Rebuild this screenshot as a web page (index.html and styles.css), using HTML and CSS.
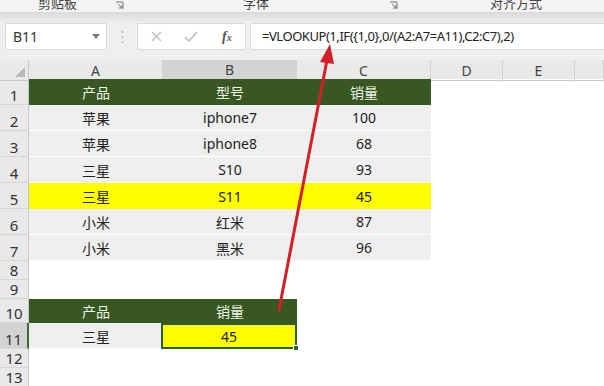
FILE: index.html
```html
<!DOCTYPE html>
<html lang="zh-CN">
  <head>
    <meta charset="UTF-8" />
    <meta name="viewport" content="width=device-width, initial-scale=1.0" />
    <title>VLOOKUP 反向查找</title>
    <link rel="stylesheet" href="styles.css">
  </head>
  <body>
    <div class="ribbon">
      <div class="group group-clip">
        <span class="group-name">剪贴板</span>
        <svg class="launcher" width="9" height="9" viewBox="0 0 9 9"><path d="M1 1 H8 V8 M3 3 L7 7 M7 4 V7 H4" fill="none" stroke="#777" stroke-width="1"/></svg>
      </div>
      <div class="group group-font">
        <span class="group-name">字体</span>
        <svg class="launcher" width="9" height="9" viewBox="0 0 9 9"><path d="M1 1 H8 V8 M3 3 L7 7 M7 4 V7 H4" fill="none" stroke="#777" stroke-width="1"/></svg>
      </div>
      <div class="group group-align">
        <span class="group-name">对齐方式</span>
      </div>
    </div>
    <div class="ribbon-shade"></div>

    <div class="formula-bar">
      <div class="name-box">
        <span>B11</span>
        <svg width="8" height="5" viewBox="0 0 8 5"><path d="M0 0 H8 L4 5 Z" fill="#7a7a7a"/></svg>
      </div>
      <div class="grip">
        <svg width="3" height="14" viewBox="0 0 3 14"><circle cx="1.5" cy="2" r="1" fill="#b5b5b5"/><circle cx="1.5" cy="7" r="1" fill="#b5b5b5"/><circle cx="1.5" cy="12" r="1" fill="#b5b5b5"/></svg>
      </div>
      <div class="fx-box">
        <svg class="btn-cancel" width="11" height="11" viewBox="0 0 11 11"><path d="M1 1 L10 10 M10 1 L1 10" stroke="#bdbdbd" stroke-width="1.4"/></svg>
        <svg class="btn-enter" width="14" height="11" viewBox="0 0 14 11"><path d="M1 6 L5 10 L13 1" fill="none" stroke="#bdbdbd" stroke-width="1.6"/></svg>
        <span class="fx">f<span class="fx-x">x</span></span>
      </div>
      <div class="formula">=VLOOKUP(1,IF({1,0},0/(A2:A7=A11),C2:C7),2)</div>
    </div>

    <div class="sheet">
      <div class="row col-heads">
        <div class="corner"></div>
        <div class="ch">A</div>
        <div class="ch active">B</div>
        <div class="ch">C</div>
        <div class="ch">D</div>
        <div class="ch">E</div>
        <div class="ch"></div>
      </div>
      <div class="row">
        <div class="rh">1</div>
        <div class="c head">产品</div>
        <div class="c head">型号</div>
        <div class="c head">销量</div>
        <div class="c"></div><div class="c"></div><div class="c"></div>
      </div>
      <div class="row">
        <div class="rh">2</div>
        <div class="c fill">苹果</div>
        <div class="c fill">iphone7</div>
        <div class="c fill">100</div>
        <div class="c"></div><div class="c"></div><div class="c"></div>
      </div>
      <div class="row">
        <div class="rh">3</div>
        <div class="c fill">苹果</div>
        <div class="c fill">iphone8</div>
        <div class="c fill">68</div>
        <div class="c"></div><div class="c"></div><div class="c"></div>
      </div>
      <div class="row">
        <div class="rh">4</div>
        <div class="c fill">三星</div>
        <div class="c fill">S10</div>
        <div class="c fill">93</div>
        <div class="c"></div><div class="c"></div><div class="c"></div>
      </div>
      <div class="row">
        <div class="rh">5</div>
        <div class="c mark">三星</div>
        <div class="c mark">S11</div>
        <div class="c mark">45</div>
        <div class="c"></div><div class="c"></div><div class="c"></div>
      </div>
      <div class="row">
        <div class="rh">6</div>
        <div class="c fill">小米</div>
        <div class="c fill">红米</div>
        <div class="c fill">87</div>
        <div class="c"></div><div class="c"></div><div class="c"></div>
      </div>
      <div class="row">
        <div class="rh">7</div>
        <div class="c fill">小米</div>
        <div class="c fill">黑米</div>
        <div class="c fill">96</div>
        <div class="c"></div><div class="c"></div><div class="c"></div>
      </div>
      <div class="row low">
        <div class="rh">8</div>
        <div class="c"></div><div class="c"></div><div class="c"></div><div class="c"></div><div class="c"></div><div class="c"></div>
      </div>
      <div class="row low">
        <div class="rh">9</div>
        <div class="c"></div><div class="c"></div><div class="c"></div><div class="c"></div><div class="c"></div><div class="c"></div>
      </div>
      <div class="row mid">
        <div class="rh">10</div>
        <div class="c head">产品</div>
        <div class="c head">销量</div>
        <div class="c"></div><div class="c"></div><div class="c"></div><div class="c"></div>
      </div>
      <div class="row">
        <div class="rh active">11</div>
        <div class="c fill">三星</div>
        <div class="c mark selected">45<span class="handle"></span></div>
        <div class="c"></div><div class="c"></div><div class="c"></div><div class="c"></div>
      </div>
      <div class="row low">
        <div class="rh">12</div>
        <div class="c"></div><div class="c"></div><div class="c"></div><div class="c"></div><div class="c"></div><div class="c"></div>
      </div>
      <div class="row low">
        <div class="rh">13</div>
        <div class="c"></div><div class="c"></div><div class="c"></div><div class="c"></div><div class="c"></div><div class="c"></div>
      </div>
    </div>

    <!-- annotation arrow pointing at the formula -->
    <svg class="arrow" width="604" height="386" viewBox="0 0 604 386">
      <line x1="279" y1="310" x2="327" y2="60" stroke="#d41f26" stroke-width="3" stroke-linecap="round"/>
      <polygon points="330,44 320,62 334,64" fill="#d41f26"/>
    </svg>
  </body>
</html>
```

FILE: styles.css
```css
* {
  margin: 0;
  padding: 0;
  box-sizing: border-box;
}

body {
  width: 604px;
  height: 386px;
  overflow: hidden;
  position: relative;
  background: #fff;
  color: #222;
  font-family: "Noto Sans", "Noto Sans CJK SC", sans-serif;
}

/* ribbon strip (cut off at top) */
.ribbon {
  height: 13px;
  display: flex;
  overflow: hidden;
  background: #f3f3f3;
  border-bottom: 1px solid #d9d9d9;
}

.group {
  display: flex;
  align-items: flex-start;
  flex-shrink: 0;
}

.group-name {
  font-size: 13px;
  line-height: 13px;
  margin-top: -3px;
  color: #444;
  white-space: nowrap;
  flex-shrink: 0;
}

.launcher {
  margin-top: 1px;
  flex-shrink: 0;
}

.group-clip {
  width: 126px;
  padding-left: 38px;
}

.group-clip .launcher {
  margin-left: 38px;
}

.group-font {
  width: 274px;
  padding-left: 117px;
}

.group-font .launcher {
  margin-left: 120px;
}

.group-align {
  padding-left: 90px;
}

.ribbon-shade {
  height: 9px;
  background: linear-gradient(#dcdcdc, #ededed);
}

/* formula bar */
.formula-bar {
  height: 38px;
  display: flex;
  align-items: flex-start;
  padding: 1px 0 0 5px;
  background: #efefef;
}

.name-box {
  width: 102px;
  height: 27px;
  background: #fff;
  border: 1px solid #dadada;
  display: flex;
  align-items: center;
  justify-content: space-between;
  padding: 0 6px 0 7px;
  font-size: 14px;
  color: #333;
}

.grip {
  width: 30px;
  height: 27px;
  display: flex;
  align-items: center;
  justify-content: center;
}

.fx-box {
  width: 109px;
  height: 27px;
  background: #fff;
  border: 1px solid #dadada;
  display: flex;
  align-items: center;
  padding-left: 13px;
}

.btn-enter {
  margin-left: 22px;
}

.fx {
  margin-left: 24px;
  font-family: "Liberation Serif", serif;
  font-style: italic;
  font-weight: bold;
  font-size: 14px;
  color: #555;
}

.fx-x {
  font-size: 10px;
}

.formula {
  flex: 1;
  height: 27px;
  margin-left: 4px;
  background: #fff;
  border: 1px solid #dadada;
  border-right: none;
  padding-left: 11px;
  line-height: 25px;
  font-size: 13px;
  letter-spacing: -0.45px;
  color: #222;
  white-space: nowrap;
}

/* grid */
.row {
  display: grid;
  grid-template-columns: 29px 134px 134px 134px 72px 72px 29px;
  height: 26px;
}

.row.low {
  height: 19px;
}

.row.mid {
  height: 24px;
}

.col-heads {
  height: 19px;
  background: #e9e9e9;
}

.corner {
  position: relative;
  border-right: 1px solid #c8c8c8;
  border-bottom: 1px solid #c8c8c8;
}

.corner::after {
  content: "";
  position: absolute;
  right: 3px;
  bottom: 3px;
  border-left: 10px solid transparent;
  border-bottom: 10px solid #b8b8b8;
}

.ch {
  display: flex;
  align-items: center;
  justify-content: center;
  font-size: 14px;
  color: #444;
  border-right: 1px solid #d2d2d2;
  border-bottom: 1px solid #c8c8c8;
}

.ch.active {
  background: #d3d3d3;
  border-bottom: 2px solid #8c9a8c;
}

.rh {
  display: flex;
  align-items: flex-end;
  justify-content: center;
  font-size: 15px;
  line-height: 18px;
  color: #333;
  background: #e9e9e9;
  border-right: 1px solid #c8c8c8;
  border-bottom: 1px solid #d6d6d6;
}

.rh.active {
  background: #d3d3d3;
  border-right: 2px solid #3b6b3b;
}

.c {
  display: flex;
  align-items: center;
  justify-content: center;
  font-size: 14px;
  color: #222;
  white-space: nowrap;
}

.c.head {
  background: #385723;
  color: #eef4e6;
}

.c.fill {
  background: #efefef;
  border-bottom: 1px solid #fff;
}

.c.mark {
  background: #ffff00;
}

.c.selected {
  position: relative;
  border: 2px solid #2d5e2d;
  margin-left: -2px;
}

.handle {
  position: absolute;
  right: -4px;
  bottom: -4px;
  width: 6px;
  height: 6px;
  background: #2d5e2d;
  border: 1px solid #fff;
}

.arrow {
  position: absolute;
  top: 0;
  left: 0;
  pointer-events: none;
}
```
